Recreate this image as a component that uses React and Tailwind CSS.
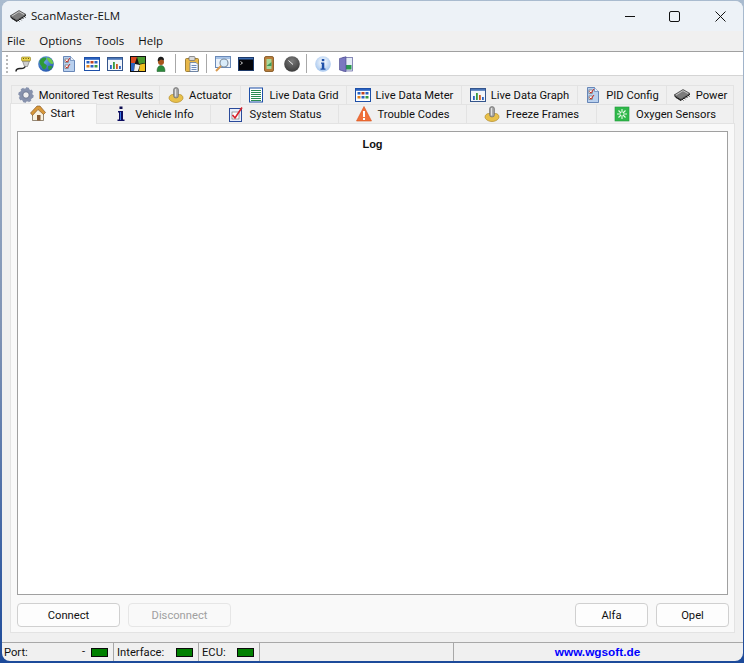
import { Fragment } from 'react'

// small pixel-ish icons, mostly drawn on a 16x16 box
const Chip = () => (
  <svg viewBox="0 0 18 14" className="w-[18px] h-[14px]">
    <g stroke="#222" strokeWidth="0.9">
      <path d="M2.500 8.500l2 2.500M4.500 9.800l2 2.500M6.500 11l1.500 2" />
      <path d="M8.500 10.500l2 2M10.500 9.300l2 2M12.500 8l2 2M14.500 6.700l2 2" />
    </g>
    <path d="M1 7l9-5.500 7 4-9 5.800z" fill="#7c7c7c" stroke="#2c2c2c" strokeWidth="0.6" />
    <path d="M3 7l7-4.300 5 2.800" fill="none" stroke="#d8d8d8" strokeWidth="0.8" />
    <path d="M1.500 8.200l6.500 3.900 9-5.800" fill="none" stroke="#111" strokeWidth="1" />
  </svg>
)

const Plug = () => (
  <svg viewBox="0 0 16 16" className="w-4 h-4">
    <path d="M1 15.500c0-2.500 2-3 4-3s5 .5 5.500-3" fill="none" stroke="#222" strokeWidth="1.500" />
    <path d="M7.500 5h7l-2 5.500H9.500z" fill="#cfcfcf" stroke="#6a6a6a" strokeWidth="0.6" />
    <rect x="6.500" y="1" width="9" height="4" rx="1" fill="#e8d24a" stroke="#8a7a20" strokeWidth="0.6" />
    <path d="M8 2.500h1M10.500 2.500h1M13 2.500h1" stroke="#6a5a10" strokeWidth="1" />
  </svg>
)

const Globe = () => (
  <svg viewBox="0 0 16 16" className="w-4 h-4">
    <defs>
      <radialGradient id="globeSea" cx="0.4" cy="0.3" r="0.8">
        <stop offset="0" stopColor="#6fa8e8" />
        <stop offset="1" stopColor="#1d4fa8" />
      </radialGradient>
    </defs>
    <circle cx="8" cy="8" r="7.800" fill="url(#globeSea)" />
    <path d="M2.500 3.500c2-2 4.500-2.500 5.500-1.500s-1 3-2 4 1.500 2 2.500 3-1 4.500-2.500 4.500-2-3-3-4-2.500-4 -.5-6z" fill="#2f9a38" />
    <path d="M9 1.500c2.500 0 5.500 1.500 6.500 6-2 1-3.500 0-4.500-1.500S8 2.500 9 1.500z" fill="#6cc84a" />
    <path d="M10.500 10c1.500-.5 3-.5 4 .5-1 2-2 3.500-3 3.500s-2-3.500-1-4z" fill="#2f9a38" />
  </svg>
)

const DocCheck = () => (
  <svg viewBox="0 0 16 16" className="w-4 h-4">
    <path d="M2.500 0.500h7l4 4v11h-11z" fill="#b9d0ee" stroke="#4a6ea8" strokeWidth="0.8" />
    <path d="M9.500 0.500v4h4" fill="#e8f0fa" stroke="#4a6ea8" strokeWidth="0.6" />
    <rect x="4" y="3" width="3.500" height="3.500" fill="#fff" stroke="#555" strokeWidth="0.6" />
    <rect x="4" y="9" width="3.500" height="3.500" fill="#fff" stroke="#555" strokeWidth="0.6" />
    <path d="M4.500 4.500l1.500 1.500 3-4M4.500 10.500l1.500 1.500 3-4" fill="none" stroke="#d02a20" strokeWidth="1" />
  </svg>
)

const ColorGrid = () => (
  <svg viewBox="0 0 16 16" className="w-4 h-4">
    <rect x="0.500" y="1.500" width="15" height="13" fill="#fff" stroke="#1d4fa8" />
    <rect x="1" y="2" width="14" height="1.800" fill="#2a62c0" />
    <rect x="2.500" y="5" width="3" height="2.500" fill="#2a62c0" />
    <rect x="6.500" y="5" width="3" height="2.500" fill="#c04020" />
    <rect x="10.500" y="5" width="3" height="2.500" fill="#2a62c0" />
    <rect x="2.500" y="9" width="3" height="2.500" fill="#e0801a" />
    <rect x="6.500" y="9" width="3" height="2.500" fill="#2a62c0" />
    <rect x="10.500" y="9" width="3" height="2.500" fill="#3a9a40" />
  </svg>
)

const ChartWin = () => (
  <svg viewBox="0 0 16 16" className="w-4 h-4">
    <rect x="0.500" y="1.500" width="15" height="13" fill="#f2f6fb" stroke="#34558c" />
    <rect x="1" y="2" width="14" height="1.800" fill="#4a76b8" />
    <rect x="3" y="9" width="1.800" height="4" fill="#2a62c0" />
    <rect x="6" y="6" width="1.800" height="7" fill="#3a9a40" />
    <rect x="9" y="8" width="1.800" height="5" fill="#d05a20" />
    <rect x="12" y="10" width="1.800" height="3" fill="#2a62c0" />
  </svg>
)

const Palette = () => (
  <svg viewBox="0 0 16 16" className="w-4 h-4">
    <rect width="16" height="16" fill="#111" />
    <path d="M1 1h6L5 7H1z" fill="#d84a20" />
    <path d="M7 1h8v6l-6 1z" fill="#4a9a30" />
    <path d="M1 7h4l-1 8H1z" fill="#2a62c0" />
    <path d="M5 8l5 1-2 6H4z" fill="#f0f0f0" />
    <path d="M10 8.500l5-1V15H9z" fill="#f0c020" />
  </svg>
)

const Person = () => (
  <svg viewBox="0 0 16 16" className="w-4 h-4">
    <path d="M4 15.500c0-4 1.500-6 4-6s4 2 4 6z" fill="#2c8a3c" stroke="#14551f" strokeWidth="0.5" />
    <circle cx="8" cy="6" r="3" fill="#a8541c" />
    <path d="M4.800 5.500C4.500 2 6 .8 8 .8s3.200 1.200 3 3.700L8 3.500z" fill="#1c1c1c" />
  </svg>
)

const Clipboard = () => (
  <svg viewBox="0 0 16 16" className="w-4 h-4">
    <rect x="1.500" y="2.500" width="13" height="13" rx="1" fill="#e8b84a" stroke="#8a6a20" strokeWidth="0.8" />
    <rect x="5" y="0.500" width="6" height="4" rx="1" fill="#d8d8d8" stroke="#666" strokeWidth="0.7" />
    <path d="M6 6.500h6l2 2v7H6z" fill="#f4f8fd" stroke="#4a6ea8" strokeWidth="0.7" />
    <path d="M7.500 9.500h5M7.500 11.500h5M7.500 13.500h5" stroke="#4a6ea8" strokeWidth="0.8" />
  </svg>
)

const Magnifier = () => (
  <svg viewBox="0 0 16 16" className="w-4 h-4">
    <rect x="0.500" y="0.500" width="15" height="11" fill="#eaf2fb" stroke="#6a8ab8" />
    <rect x="1" y="1" width="14" height="2" fill="#a8c4e8" />
    <circle cx="9" cy="7" r="4" fill="#d9ecfa" stroke="#7a8a9a" strokeWidth="1.100" />
    <path d="M6 10l-5 5" stroke="#d89a50" strokeWidth="2" />
  </svg>
)

const Terminal = () => (
  <svg viewBox="0 0 16 16" className="w-4 h-4">
    <rect x="0.500" y="1.500" width="15" height="13" fill="#05060a" stroke="#1d3a6a" />
    <rect x="1" y="2" width="14" height="1.500" fill="#3a6ab0" />
    <path d="M2.500 5.500l2 1.500-2 1.500" fill="none" stroke="#fff" strokeWidth="0.8" />
  </svg>
)

const Handheld = () => (
  <svg viewBox="0 0 16 16" className="w-4 h-4">
    <rect x="3.500" y="0.500" width="9" height="15" rx="1.500" fill="#b97d3a" stroke="#7a4e18" strokeWidth="0.8" />
    <rect x="5.500" y="3" width="5" height="10" fill="#a8d89a" />
    <path d="M5.500 10l5-4v4z" fill="#3f9a58" />
  </svg>
)

const Gauge = () => (
  <svg viewBox="0 0 16 16" className="w-4 h-4">
    <defs>
      <radialGradient id="gaugeFace" cx="0.5" cy="0.3" r="0.8">
        <stop offset="0" stopColor="#7a7a7a" />
        <stop offset="1" stopColor="#333" />
      </radialGradient>
    </defs>
    <circle cx="8" cy="8" r="7.800" fill="url(#gaugeFace)" />
    <path d="M4.500 4.500L9 8.500" stroke="#f2f2f2" strokeWidth="1" />
  </svg>
)

const Info = () => (
  <svg viewBox="0 0 16 16" className="w-4 h-4">
    <defs>
      <radialGradient id="infoBall" cx="0.5" cy="0.4" r="0.65">
        <stop offset="0" stopColor="#ffffff" />
        <stop offset="1" stopColor="#9cc0ec" />
      </radialGradient>
    </defs>
    <circle cx="8" cy="8" r="7.800" fill="url(#infoBall)" />
    <rect x="6.800" y="3" width="2.500" height="2.200" fill="#1d4fa8" />
    <path d="M6 6.500h3.300v6H10.500v1.200h-5v-1.200H6.800V7.700H6z" fill="#1d4fa8" />
  </svg>
)

const Door = () => (
  <svg viewBox="0 0 16 16" className="w-4 h-4">
    <rect x="5" y="1.500" width="9.500" height="13.500" fill="#e4ecf6" stroke="#5a5a9a" strokeWidth="0.7" />
    <rect x="8" y="9" width="5.500" height="4.500" fill="#2c9a50" />
    <path d="M1.500 2.500L8 .7v15l-6.500-1.800z" fill="#7a78c0" stroke="#45458a" strokeWidth="0.6" />
  </svg>
)

const Cog = () => (
  <svg viewBox="0 0 16 16" className="w-4 h-4">
    <circle cx="8" cy="8" r="5" fill="none" stroke="#8792ad" strokeWidth="3.600" />
    <circle cx="8" cy="8" r="6.800" fill="none" stroke="#8792ad" strokeWidth="1.800" strokeDasharray="3 2.300" />
    <circle cx="8" cy="8" r="3.200" fill="none" stroke="#4e5a78" strokeWidth="0.7" />
  </svg>
)

const Lever = () => (
  <svg viewBox="0 0 16 16" className="w-4 h-4">
    <path d="M1 11c0-2 2-3.500 3.500-3.500h7C13.500 7.500 15 9 15 11s-3 4.500-7 4.500S1 13 1 11z" fill="#e8c04a" stroke="#a8801a" strokeWidth="0.6" />
    <rect x="5.500" y="0.500" width="5" height="10.500" rx="2.500" fill="#a0a0a0" stroke="#666" strokeWidth="0.6" />
    <rect x="7" y="2" width="1.200" height="7.500" fill="#e2e2e2" />
  </svg>
)

const ListGrid = () => (
  <svg viewBox="0 0 16 16" className="w-4 h-4">
    <rect x="1.500" y="1" width="13" height="14" fill="#fff" stroke="#1d4fa8" />
    <path d="M3 3.500h10M3 5.500h10M3 7.500h10M3 9.500h10M3 11.500h10M3 13.500h10" stroke="#2a8a50" strokeWidth="1" />
  </svg>
)

const House = () => (
  <svg viewBox="0 0 16 16" className="w-4 h-4">
    <path d="M2.500 8v7.500h11V8L8 3z" fill="#f8f2e2" stroke="#6a5a44" strokeWidth="0.7" />
    <path d="M0.500 8L7 1h3l5.500 6.500-2 2L8 4.500 2.500 10.500z" fill="#d8983a" stroke="#7a4e20" strokeWidth="0.6" />
    <rect x="7" y="10" width="3.500" height="5.500" fill="#8a5a30" />
  </svg>
)

const InfoI = () => (
  <svg viewBox="0 0 16 16" className="w-4 h-4">
    <rect x="6.500" y="0.500" width="3" height="2.500" fill="#0c0c50" />
    <path d="M5 5h5v8.500h1.500V15h-7v-1.500H6V6.500H5z" fill="#0c0c60" />
    <path d="M7.500 6v8" stroke="#3a7ae8" strokeWidth="1" />
  </svg>
)

const CheckDoc = () => (
  <svg viewBox="0 0 16 16" className="w-4 h-4">
    <rect x="1.500" y="2.500" width="12" height="13" fill="#e8eefa" stroke="#2a4a9a" />
    <rect x="4" y="6" width="7" height="7" fill="#fff" stroke="#666" strokeWidth="0.6" />
    <path d="M4.500 9l2.500 3 7-10.500" fill="none" stroke="#d8202a" strokeWidth="1.600" />
  </svg>
)

const Warn = () => (
  <svg viewBox="0 0 16 16" className="w-4 h-4">
    <path d="M8 0.500L15.500 15H.5z" fill="#f0703a" stroke="#d8501a" strokeWidth="0.6" />
    <rect x="7" y="5" width="2" height="6" fill="#fff" />
    <rect x="7" y="12" width="2" height="2" fill="#fff" />
  </svg>
)

const Oxygen = () => (
  <svg viewBox="0 0 16 16" className="w-4 h-4">
    <rect x="1" y="1" width="14" height="14" fill="#2fb84a" stroke="#1f9a3a" strokeWidth="0.6" />
    <path d="M8 3v3.500M8 9.500V13M3 8h3.500M9.500 8H13M4.500 4.500L7 7M11.500 4.500L9 7M4.500 11.500L7 9M11.500 11.500L9 9" stroke="#eafbe8" strokeWidth="1.100" />
  </svg>
)

const toolbar = [
  [Plug, Globe, DocCheck, ColorGrid, ChartWin, Palette, Person],
  [Clipboard],
  [Magnifier, Terminal, Handheld, Gauge],
  [Info, Door],
]

const topTabs = [
  { label: 'Monitored Test Results', icon: Cog, w: 'w-[149px]' },
  { label: 'Actuator', icon: Lever, w: 'w-[82px]' },
  { label: 'Live Data Grid', icon: ListGrid, w: 'w-[107px]' },
  { label: 'Live Data Meter', icon: ColorGrid, w: 'w-[116px]' },
  { label: 'Live Data Graph', icon: ChartWin, w: 'w-[117px]' },
  { label: 'PID Config', icon: DocCheck, w: 'w-[90px]' },
  { label: 'Power', icon: Chip, w: 'w-[68px]' },
]

const bottomTabs = [
  { label: 'Vehicle Info', icon: InfoI, w: 'w-[115px]' },
  { label: 'System Status', icon: CheckDoc, w: 'w-[129px]' },
  { label: 'Trouble Codes', icon: Warn, w: 'w-[129px]' },
  { label: 'Freeze Frames', icon: Lever, w: 'w-[131px]' },
  { label: 'Oxygen Sensors', icon: Oxygen, w: 'w-[138px]' },
]

function Tab({ tab, gap }) {
  const Icon = tab.icon
  return (
    <div className={`${tab.w} ${gap} h-[19px] flex items-center justify-center whitespace-nowrap bg-[#f0f0f0] border border-b-0 border-[#e3e3e3] -mr-px`}>
      <Icon />
      <span className="pt-[2px]">{tab.label}</span>
    </div>
  )
}

function Led() {
  return <span className="w-[17px] h-[9px] bg-[#008000] border border-[#0a0a0a]"></span>
}

export default function App() {
  return (
    <div className="w-[744px] h-[663px] bg-gradient-to-b from-[#a9bbcf] via-[#7f93b4] to-[#1c4a9a] pl-[2px] pr-px pt-px pb-[2px]">
      <div className="h-full bg-[#f0f0f0] flex flex-col text-[11.2px] leading-none text-[#111] rounded-lg overflow-hidden font-['Roboto',sans-serif]">
        {/* Title bar */}
        <div className="h-[30px] shrink-0 bg-[#edf2f7] flex items-center pl-[7px] font-['Open_Sans',sans-serif]">
          <Chip />
          <span className="ml-[4px] text-[11.5px]">ScanMaster-ELM</span>
          <div className="ml-auto flex items-center">
            <svg viewBox="0 0 46 30" className="w-[46px] h-[30px]">
              <path d="M20 15.500h10" stroke="#111" strokeWidth="1" />
            </svg>
            <svg viewBox="0 0 46 30" className="w-[46px] h-[30px]">
              <rect x="18.500" y="10.500" width="10" height="10" rx="1.500" fill="none" stroke="#111" />
            </svg>
            <svg viewBox="0 0 46 30" className="w-[46px] h-[30px]">
              <path d="M18.500 10.500l10 10M28.500 10.500l-10 10" stroke="#111" />
            </svg>
          </div>
        </div>

        {/* Menu */}
        <div className="h-[20px] shrink-0 flex items-center pl-[5px] gap-[14px] text-[11.5px] font-['Open_Sans',sans-serif]">
          <span>File</span>
          <span>Options</span>
          <span>Tools</span>
          <span>Help</span>
        </div>

        {/* Toolbar */}
        <div className="h-[25px] shrink-0 bg-white border-y border-t-[#a0a0a0] border-b-[#d4d4d4] flex items-center pl-[4px]">
          <div className="h-[18px] w-[2px] border-l-2 border-dotted border-[#b8b8b8] mr-[7px]"></div>
          {toolbar.map((group, i) => (
            <Fragment key={i}>
              {i > 0 && <div className="w-px h-[19px] bg-[#a8a8a8] ml-[6px] mr-[8px]"></div>}
              <div className="flex items-center gap-[7px]">
                {group.map((Icon, j) => <Icon key={j} />)}
              </div>
            </Fragment>
          ))}
        </div>

        {/* Tabs */}
        <div className="flex-1 flex flex-col pl-[8px] pr-[8px] pt-[9px] pb-[9px] min-h-0">
          <div className="flex pl-[1px] h-[19px] shrink-0">
            {topTabs.map((t) => <Tab key={t.label} tab={t} gap="gap-[5px]" />)}
          </div>
          <div className="flex h-[19px] shrink-0 relative z-10">
            <div className="w-[87px] h-[21px] -mt-px pb-[3px] pr-[2px] -mr-px flex items-center justify-center gap-[4px] bg-[#f9f9f9] border border-b-0 border-[#e3e3e3]">
              <House />
              <span className="pt-[2px]">Start</span>
            </div>
            {bottomTabs.map((t) => <Tab key={t.label} tab={t} gap="gap-[6px]" />)}
          </div>
          <div className="flex-1 min-h-0 bg-[#f9f9f9] border border-[#e3e3e3] flex flex-col pl-[6px] pr-[6px] pt-[7px] pb-[5px]">
            <div className="flex-1 min-h-0 bg-white border border-[#a0a0a0] pt-[7px] text-center font-bold text-[11px] font-['Liberation_Sans',sans-serif]">Log</div>
            <div className="flex h-[24px] mt-[8px] -mr-px gap-[8px] shrink-0">
              <button className="w-[103px] pt-[1px] bg-[#fdfdfd] border border-[#d0d0d0] rounded-[4px]">Connect</button>
              <button className="w-[103px] pt-[1px] bg-[#f9f9f9] border border-[#e6e6e6] rounded-[4px] text-[#a0a0a0]">Disconnect</button>
              <button className="w-[73px] pt-[1px] ml-auto bg-[#fdfdfd] border border-[#d0d0d0] rounded-[4px]">Alfa</button>
              <button className="w-[73px] pt-[1px] bg-[#fdfdfd] border border-[#d0d0d0] rounded-[4px]">Opel</button>
            </div>
          </div>
        </div>

        {/* Status bar */}
        <div className="h-[19px] shrink-0 flex">
          <div className="w-[112px] border-t border-r border-[#a8a8a8] flex items-center pl-[2px] pr-[5px]">
            <span className="pt-[2px]">Port:</span>
            <span className="ml-auto mr-[6px]">-</span>
            <Led />
          </div>
          <div className="w-[85px] border-t border-r border-[#a8a8a8] flex items-center pl-[3px] pr-[5px] justify-between">
            <span className="pt-[2px]">Interface:</span>
            <Led />
          </div>
          <div className="w-[61px] border-t border-r border-[#a8a8a8] flex items-center pl-[3px] pr-[5px] justify-between">
            <span className="pt-[2px]">ECU:</span>
            <Led />
          </div>
          <div className="w-[194px] border-t border-r border-[#a8a8a8]"></div>
          <div className="flex-1 border-t border-[#a8a8a8] flex items-center justify-center pt-[2px] pr-[2px] font-bold text-[11.8px] text-[#0000ff] font-['Liberation_Sans',sans-serif]">
            www.wgsoft.de
          </div>
        </div>
      </div>
    </div>
  )
}
